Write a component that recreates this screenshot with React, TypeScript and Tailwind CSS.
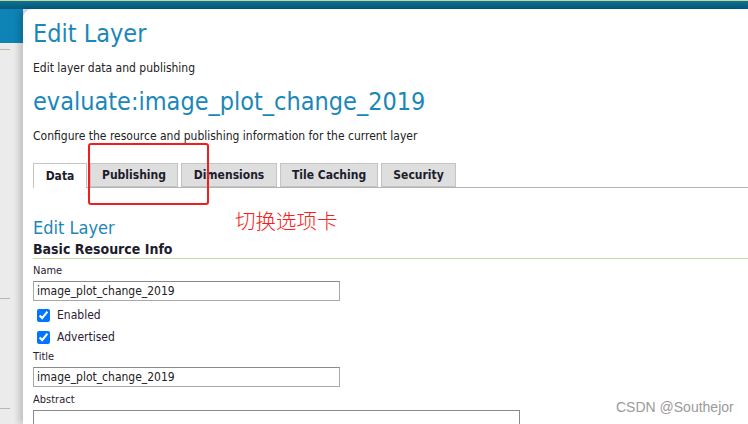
import React from "react";

const tabs = [
    { name: "Data", w: "w-[54px]" },
    { name: "Publishing", w: "w-[88px]" },
    { name: "Dimensions", w: "w-[96px]" },
    { name: "Tile Caching", w: "w-[98px]" },
    { name: "Security", w: "w-[75px]" },
];

const Field = ({ label, value }: { label: string; value: string }) => (
    <div className="flex flex-col">
        <label className="text-[11px] leading-[14px] text-[#2a2233]">{label}</label>
        <div className="mt-[3px] w-[307px] h-[20px] border border-[#a8a8a8] border-t-[#8a8a8a] px-[3px] text-[12px] leading-[18px] text-[#222]">
            {value}
        </div>
    </div>
);

const Check = ({ label }: { label: string }) => (
    <div className="flex items-center h-[22px] pl-[4px] gap-[7px]">
        <input type="checkbox" defaultChecked className="w-[13px] h-[13px] m-0" />
        <span className="text-[12px] text-[#2a2233]">{label}</span>
    </div>
);

export default function App() {
    return (
        <div
            className="relative w-[748px] h-[424px] overflow-hidden bg-[#ebebeb]"
            style={{ fontFamily: '"DejaVu Sans Condensed", "DejaVu Sans", "Noto Sans CJK SC", sans-serif' }}
        >
            <div className="h-[9px] border-t border-[#cdd78e] bg-gradient-to-b from-[#0b7196] to-[#045a7c]" />
            <div className="flex h-[415px]">
                <div className="w-[23px] flex flex-col">
                    <div className="h-[34px] bg-[#0d84b5]" />
                    <div className="h-[6px]" />
                    <div className="h-px w-[10px] bg-[#b9bba6]" />
                    <div className="h-[248px]" />
                    <div className="h-px w-[10px] bg-[#b9bba6]" />
                    <div className="h-[109px]" />
                    <div className="h-px w-[10px] bg-[#b9bba6]" />
                </div>
                <div className="flex-1 bg-white rounded-tl-[9px] shadow-[-4px_0_6px_rgba(0,0,0,0.18)] pl-[10px]">
                    <h1 className="mt-[9px] text-[25px] leading-[32px] text-[#1b87b9]">Edit Layer</h1>
                    <p className="mt-[10px] text-[12px] leading-[16px] text-[#222]">Edit layer data and publishing</p>
                    <h2 className="mt-[10px] text-[25px] leading-[32px] text-[#1b87b9]">evaluate:image_plot_change_2019</h2>
                    <p className="mt-[10px] text-[12px] leading-[16px] text-[#222]">Configure the resource and publishing information for the current layer</p>
                    <div className="mt-[19px] flex gap-[3px] border-b border-[#b4b4b4] h-[25px]">
                        {tabs.map((t, i) => (
                            <div
                                key={t.name}
                                className={
                                    i === 0
                                        ? `${t.w} h-[25px] border border-b-0 border-[#c4c4c4] bg-white text-center text-[12px] font-bold leading-[24px] text-[#1c1c2c]`
                                        : `${t.w} h-[24px] border border-[#c4c4c4] bg-[#dedede] text-center text-[12px] font-bold leading-[22px] text-[#1c1c2c]`
                                }
                            >
                                {t.name}
                            </div>
                        ))}
                    </div>
                    <h3 className="mt-[29px] text-[18px] leading-[22px] text-[#1b87b9]">Edit Layer</h3>
                    <h4 className="mt-[1px] text-[14px] leading-[18px] font-bold text-[#1c1c2c]">Basic Resource Info</h4>
                    <div className="h-px bg-[#c5df9f]" />
                    <div className="mt-[5px] flex flex-col">
                        <Field label="Name" value="image_plot_change_2019" />
                        <div className="mt-[3px]">
                            <Check label="Enabled" />
                            <Check label="Advertised" />
                        </div>
                        <div className="mt-[2px]">
                            <Field label="Title" value="image_plot_change_2019" />
                        </div>
                        <label className="mt-[6px] text-[11px] leading-[14px] text-[#2a2233]">Abstract</label>
                        <div className="mt-[3px] w-[487px] h-[40px] border border-[#8a8a8a]" />
                    </div>
                </div>
            </div>

            <div className="absolute left-[88px] top-[143px] w-[121px] h-[62px] border-2 border-[#f21d1d] rounded-[3px]" />
            <div className="absolute left-[235px] top-[207px] text-[20.5px] leading-[26px] font-light text-[#f52020]" style={{ fontFamily: '"Noto Sans CJK SC", sans-serif' }}>
                切换选项卡
            </div>
            <div className="absolute left-[616px] top-[398px] text-[14px] leading-[18px] text-[#9a9a9a]" style={{ fontFamily: '"Liberation Sans", Arial, sans-serif' }}>
                CSDN @Southejor
            </div>
        </div>
    );
}
